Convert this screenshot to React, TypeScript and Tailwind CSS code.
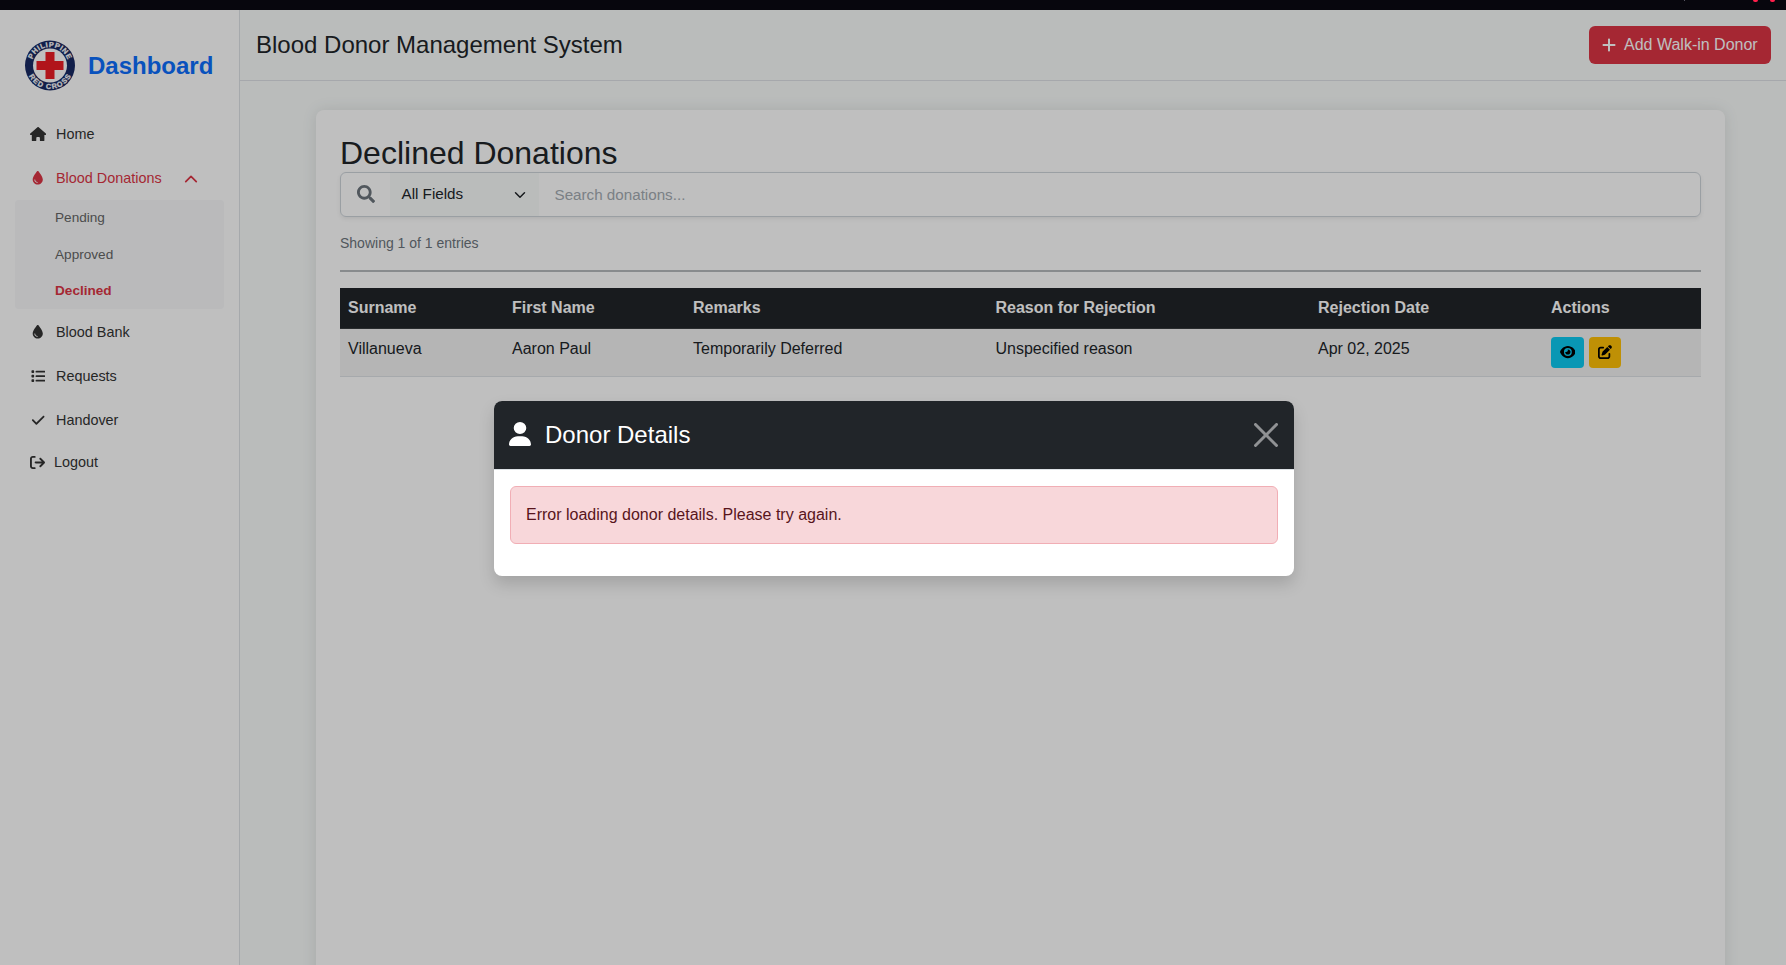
import React from "react";
import {
  FaHouse,
  FaDroplet,
  FaList,
  FaCheck,
  FaArrowRightFromBracket,
  FaPlus,
  FaEye,
  FaPenToSquare,
  FaUser,
} from "react-icons/fa6";
import { FaSearch } from "react-icons/fa";

function Logo() {
  return (
    <svg width="50" height="51" viewBox="0 0 100 102" className="shrink-0">
      <defs>
        <path id="arc-top" d="M 13 51 A 37 37 0 0 1 87 51" />
        <path id="arc-bottom" d="M 3 51 A 47 47 0 0 0 97 51" />
      </defs>
      <circle cx="50" cy="51" r="50" fill="#192a63" />
      <circle cx="50" cy="51" r="34" fill="#ffffff" />
      <path d="M41 24h18v18h18v18H59v18H41V60H23V42h18z" fill="#ed1c24" />
      <g fill="#ffffff" stroke="#ffffff" strokeWidth="0.5" fontFamily="Liberation Sans, sans-serif" fontWeight="700" fontSize="14.5" textAnchor="middle">
        <text textLength="92" lengthAdjust="spacing">
          <textPath href="#arc-top" startOffset="50%">PHILIPPINE</textPath>
        </text>
        <text textLength="104" lengthAdjust="spacing">
          <textPath href="#arc-bottom" startOffset="50%">RED CROSS</textPath>
        </text>
      </g>
    </svg>
  );
}

function Chevron({ up = false, className = "" }: { up?: boolean; className?: string }) {
  return (
    <svg viewBox="0 0 16 16" className={className} fill="none" stroke="currentColor" strokeWidth="2" strokeLinecap="round" strokeLinejoin="round">
      <path d={up ? "M2 11l6-6 6 6" : "M2 5l6 6 6-6"} />
    </svg>
  );
}

function NavItem({ icon, label }: { icon: React.ReactNode; label: string }) {
  return (
    <a className="flex h-11 items-center pl-[29.5px] text-[14.4px] text-[#333333]">
      <span className="-mt-0.5 mr-[9.5px] flex w-[17px] justify-center">{icon}</span>
      {label}
    </a>
  );
}

function Sidebar() {
  return (
    <aside className="h-full w-60 shrink-0 border-r border-[#dee2e6] bg-white pt-[30px]">
      <div className="flex items-center pl-[25px]">
        <Logo />
        <span className="ml-[13px] text-2xl font-bold text-[#0d6efd]">Dashboard</span>
      </div>
      <nav className="mt-[22px]">
        <NavItem icon={<FaHouse className="h-[14.4px] w-[16.2px]" />} label="Home" />
        <a className="flex h-11 items-center pl-[29.5px] text-[14.4px] text-[#dc3545]">
          <span className="-mt-0.5 mr-[9.5px] flex w-[17px] justify-center">
            <FaDroplet className="size-[13.5px]" />
          </span>
          Blood Donations
          <Chevron up className="ml-[22px] size-[14px]" />
        </a>
        <div className="-mt-px ml-[15px] flex h-[109px] w-[209px] flex-col rounded bg-[#f8f9fa] pl-10 text-[13.6px] text-[#666666]">
          <a className="flex h-9 items-center">Pending</a>
          <a className="flex h-[38px] items-center">Approved</a>
          <a className="flex h-[35px] items-center font-bold text-[#dc3545]">Declined</a>
        </div>
        <div className="mt-[2px]">
          <NavItem icon={<FaDroplet className="size-[13.5px]" />} label="Blood Bank" />
          <NavItem icon={<FaList className="size-[14.4px]" />} label="Requests" />
          <NavItem icon={<FaCheck className="size-[14.4px]" />} label="Handover" />
        </div>
        <a className="flex h-[40px] items-center pl-[30px] text-[14.4px] text-[#333333]">
          <FaArrowRightFromBracket className="-mt-0.5 mr-[9px] size-[15px]" />
          Logout
        </a>
      </nav>
    </aside>
  );
}

const columns = ["Surname", "First Name", "Remarks", "Reason for Rejection", "Rejection Date", "Actions"];
const donor = ["Villanueva", "Aaron Paul", "Temporarily Deferred", "Unspecified reason", "Apr 02, 2025"];

function DonationTable() {
  return (
    <table className="mt-4 w-full table-fixed border-separate border-spacing-0 text-left text-base">
      <colgroup>
        <col className="w-[164px]" />
        <col className="w-[181px]" />
        <col className="w-[302.5px]" />
        <col className="w-[322.5px]" />
        <col className="w-[233px]" />
        <col />
      </colgroup>
      <thead>
        <tr className="bg-[#212529] text-white">
          {columns.map((c) => (
            <th key={c} className="h-[41px] border-b border-[#373b3e] px-2 pb-px pt-0 font-bold">{c}</th>
          ))}
        </tr>
      </thead>
      <tbody>
        <tr className="bg-[#f2f2f2] text-[#212529]">
          {donor.map((d) => (
            <td key={d} className="h-[48px] border-b border-[#dee2e6] px-2 pb-0 pt-2 align-top">{d}</td>
          ))}
          <td className="h-[48px] border-b border-[#dee2e6] px-2 pb-0 pt-2 align-top">
            <div className="flex gap-[5px]">
              <button className="flex h-[31px] w-[33px] items-center justify-center rounded bg-[#0dcaf0] pb-[2px] text-black">
                <FaEye className="h-[14px] w-[15.75px]" />
              </button>
              <button className="flex h-[31px] w-8 items-center justify-center rounded bg-[#ffc107] pb-[2px] text-black">
                <FaPenToSquare className="size-[14px]" />
              </button>
            </div>
          </td>
        </tr>
      </tbody>
    </table>
  );
}

function DonorModal() {
  return (
    <div className="w-[800px] overflow-hidden rounded-lg bg-white shadow-[0_8px_16px_rgba(0,0,0,0.15)]">
      <div className="flex h-[69px] items-center border-b border-[#dee2e6] bg-[#212529] px-4 text-white">
        <FaUser className="-ml-[1px] mr-[14px] mt-[-3px] h-6 w-[22px]" preserveAspectRatio="none" />
        <h5 className="grow text-2xl leading-9">Donor Details</h5>
        <svg viewBox="0 0 16 16" className="size-6 opacity-50" fill="#ffffff">
          <path d="M.293.293a1 1 0 0 1 1.414 0L8 6.586 14.293.293a1 1 0 1 1 1.414 1.414L9.414 8l6.293 6.293a1 1 0 0 1-1.414 1.414L8 9.414l-6.293 6.293a1 1 0 0 1-1.414-1.414L6.586 8 .293 1.707a1 1 0 0 1 0-1.414z" />
        </svg>
      </div>
      <div className="px-4 pb-8 pt-4">
        <div className="flex h-[58px] items-center rounded-md border border-[#f1aeb5] bg-[#f8d7da] px-[15px] pb-px text-base text-[#58151c]">
          Error loading donor details. Please try again.
        </div>
      </div>
    </div>
  );
}

export default function App() {
  return (
    <div className="flex h-screen w-screen flex-col overflow-hidden bg-[#07060d] font-['Liberation_Sans',Arial,sans-serif]">
      <div className="flex h-2.5 shrink-0 items-start justify-end gap-3 bg-[#07060d] pr-[11px]">
        <span className="mr-[56px] h-px w-px bg-[#55535f]" />
        <span className="h-0.5 w-[5px] rounded-b-sm bg-[#ff1f4b]" />
        <span className="h-0.5 w-[5px] rounded-b-sm bg-[#ff1f4b]" />
      </div>
      <div className="relative flex min-h-0 grow bg-[#f8fbfa]">
        <Sidebar />
        <div className="flex min-w-0 grow flex-col">
          <header className="flex h-[71px] shrink-0 items-center justify-between border-b border-[#dee0e6] pl-4 pr-[15px]">
            <h4 className="text-2xl text-[#212529]">Blood Donor Management System</h4>
            <button className="flex h-[38px] w-[182px] items-center rounded-md bg-[#dc3545] pl-[12px] text-base text-white">
              <FaPlus className="mr-[7px] -mt-px size-4" />
              Add Walk-in Donor
            </button>
          </header>
          <main className="-mb-6 ml-[76px] mr-[61px] mt-[29px] grow rounded-lg bg-white px-6 pt-6 shadow-[0_0_15px_rgba(0,0,0,0.1)]">
            <h2 className="h-[38px] text-[32px] leading-[38px] text-[#212529]">Declined Donations</h2>
            <div className="flex h-[45px] overflow-hidden rounded-md border border-[#ced4da] shadow-[0_2px_4px_rgba(0,0,0,0.075)]">
              <div className="flex w-[49px] items-center justify-center pb-px text-[#6c757d]">
                <FaSearch className="size-[18px]" />
              </div>
              <div className="flex w-[149px] items-center justify-between bg-[#f8fbfa] pl-[11.5px] pr-[13px] text-[15.2px] text-[#212529]">
                <span className="-mt-px">All Fields</span>
                <Chevron className="size-3" />
              </div>
              <div className="flex grow items-center pl-[15.5px] pt-px text-[15.2px] text-[#a4abb2]">Search donations...</div>
            </div>
            <p className="mt-4 h-[21px] text-sm leading-[21px] text-[#6c757d]">Showing 1 of 1 entries</p>
            <hr className="mt-4 border-t-2 border-[#b6babd]" />
            <DonationTable />
          </main>
        </div>
        <div className="absolute inset-0 flex items-start justify-center bg-black/25 pl-[2px] pt-[391px]">
          <DonorModal />
        </div>
      </div>
    </div>
  );
}
